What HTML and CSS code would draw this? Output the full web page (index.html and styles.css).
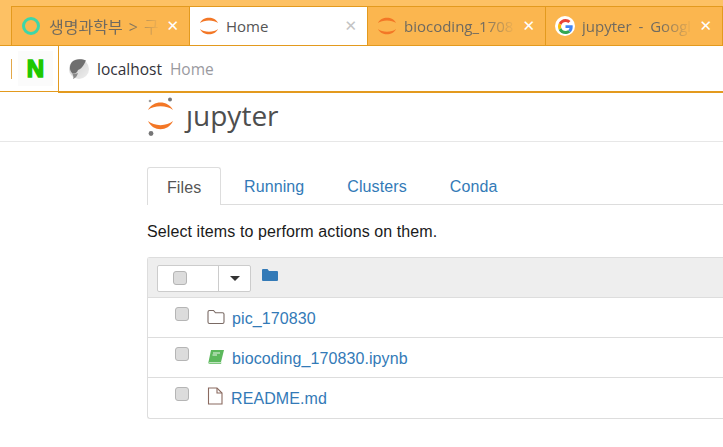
FILE: index.html
```html
<!DOCTYPE html>
<html lang="ko">
<head>
    <meta charset="UTF-8">
    <title>Home</title>
    <link rel="stylesheet" href="styles.css">
</head>
<body>
    <svg class="defs">
        <symbol id="jup" viewBox="0 0 20 20">
            <path d="M1 7 C4 0 16 0 19 7 C15 3.500 5 3.500 1 7Z" fill="#f37726"/>
            <path d="M1 13 C5 16.500 15 16.500 19 13 C16 20 4 20 1 13Z" fill="#f37726"/>
        </symbol>
    </svg>

    <div class="tabstrip">
        <div class="tab">
            <span class="ring"></span>
            <span class="tab-title first">생명과학부 &gt; 구</span>
            <span class="tab-x">✕</span>
        </div>
        <div class="tab active">
            <svg class="fav"><use href="#jup"/></svg>
            <span class="tab-title">Home</span>
            <span class="tab-x">✕</span>
        </div>
        <div class="tab">
            <svg class="fav"><use href="#jup"/></svg>
            <span class="tab-title">biocoding_1708</span>
            <span class="tab-x">✕</span>
        </div>
        <div class="tab">
            <span class="g-badge">
                <svg viewBox="0 0 48 48" width="15" height="15">
                    <path fill="#ea4335" d="M24 9.500c3.500 0 6.700 1.200 9.200 3.600l6.900-6.900C35.900 2.400 30.400 0 24 0 14.600 0 6.500 5.400 2.600 13.200l8 6.200C12.500 13.600 17.800 9.500 24 9.500z"/>
                    <path fill="#4285f4" d="M47 24.500c0-1.600-.1-3.100-.4-4.500H24v9h12.900c-.6 3-2.200 5.500-4.700 7.200l7.700 6C44.400 38.500 47 32 47 24.500z"/>
                    <path fill="#fbbc05" d="M10.600 28.600c-.5-1.400-.8-3-.8-4.600s.3-3.200.8-4.600l-8-6.200C.9 16.500 0 20.100 0 24s.9 7.500 2.600 10.800l8-6.200z"/>
                    <path fill="#34a853" d="M24 48c6.500 0 11.900-2.100 15.900-5.800l-7.700-6c-2.200 1.400-4.900 2.300-8.200 2.300-6.200 0-11.500-4.200-13.400-9.800l-8 6.200C6.500 42.600 14.600 48 24 48z"/>
                </svg>
            </span>
            <span class="tab-title wide">jupyter - Googl</span>
            <span class="tab-x">✕</span>
        </div>
    </div>

    <div class="addressbar">
        <div class="bar-left">
            <span class="bar-sep"></span>
            <span class="naver">N</span>
        </div>
        <div class="url">
            <svg class="site-icon" viewBox="0 0 20 20" width="20" height="20">
                <defs>
                    <linearGradient id="globe" x1="0" y1="0" x2="1" y2="1">
                        <stop offset="0" stop-color="#c8c8c8"/>
                        <stop offset="1" stop-color="#f0f0f0"/>
                    </linearGradient>
                </defs>
                <circle cx="10" cy="10" r="10" fill="url(#globe)"/>
                <path d="M3 3 C6 -0.500 13 -0.500 17 1.500 C15 5 14 9 9 11 C8 14 6 15 3 14 C0 11 0.500 6 3 3Z" fill="#6f6f6f"/>
                <path d="M3 14 C5 15 7 15 9 14 C8 17 7 19 4 20 C5 18 4 16 3 14Z" fill="#8a8a8a"/>
            </svg>
            <span class="host">localhost</span>
            <span class="page-title">Home</span>
        </div>
    </div>

    <div class="header">
        <div class="logo">
            <svg class="logo-mark" viewBox="0 0 28 40" width="28" height="40">
                <circle cx="23" cy="2.500" r="2" fill="#767677"/>
                <circle cx="4" cy="36.500" r="2.400" fill="#767677"/>
                <circle cx="3" cy="4" r="1.300" fill="#9e9e9e"/>
                <path d="M1 13 C6 3 21 3 26 13 C20 8 7 8 1 13Z" fill="#f37726"/>
                <path d="M1 24 C7 29.500 20 29.500 26 24 C21 35 6 35 1 24Z" fill="#f37726"/>
            </svg>
            <span class="logo-text">ȷupyter</span>
        </div>
    </div>

    <div class="main">
        <ul class="nav-tabs">
            <li class="current">Files</li>
            <li>Running</li>
            <li>Clusters</li>
            <li>Conda</li>
        </ul>
        <p class="hint">Select items to perform actions on them.</p>

        <div class="list">
            <div class="toolbar">
                <div class="select-btn">
                    <span class="check-wrap"><span class="check"></span></span>
                    <span class="caret-wrap"><span class="caret"></span></span>
                </div>
                <svg class="new-folder" viewBox="0 0 16 14" width="16" height="14">
                    <path d="M0 2 Q0 1 1 1 H5.500 L7 3 H15 Q16 3 16 4 V12 Q16 13 15 13 H1 Q0 13 0 12Z" fill="#337ab7"/>
                </svg>
            </div>
            <div class="row">
                <span class="check"></span>
                <svg class="item-icon" viewBox="0 0 18 16" width="18" height="16">
                    <path d="M1 3 Q1 1.500 2.500 1.500 H6.500 L8.500 3.800 H15.500 Q17 3.800 17 5.300 V13 Q17 14.500 15.500 14.500 H2.500 Q1 14.500 1 13Z" fill="none" stroke="#7a6a64" stroke-width="1.100"/>
                </svg>
                <a class="item-name">pic_170830</a>
            </div>
            <div class="row">
                <span class="check"></span>
                <svg class="item-icon" viewBox="0 0 18 16" width="18" height="16">
                    <path d="M4 1 H17 L14 13 H1.500Z" fill="#5cb85c"/>
                    <path d="M1 13 Q1 15 3 15 H14 L14.500 13.500 H3 Z" fill="#7fc77f"/>
                    <path d="M6 4 H13 M5.500 6 H10" stroke="#e6f5e6" stroke-width="1"/>
                </svg>
                <a class="item-name">biocoding_170830.ipynb</a>
            </div>
            <div class="row">
                <span class="check"></span>
                <svg class="item-icon tall" viewBox="0 0 16 18" width="16" height="18">
                    <path d="M1.500 17 V1 H10 L15 6 V17Z" fill="none" stroke="#8a6a60" stroke-width="1.100"/>
                    <path d="M10 1 V6 H15" fill="none" stroke="#8a6a60" stroke-width="1.100"/>
                </svg>
                <a class="item-name readme">README.md</a>
            </div>
        </div>
    </div>
</body>
</html>
```

FILE: styles.css
```css
html, body {
    margin: 0;
    height: 447px;
    overflow: hidden;
    background: #ffffff;
    font-family: "Liberation Sans", Arial, sans-serif;
}

.defs {
    display: none;
}

/* barra de abas */
.tabstrip {
    display: flex;
    height: 46px;
    box-sizing: border-box;
    padding: 6px 0 0 11px;
    background: #fdc164;
    border-bottom: 1px solid #e39a1e;
}

.tab {
    width: 178px;
    height: 39px;
    box-sizing: border-box;
    display: flex;
    align-items: center;
    padding: 0 10px 0 9px;
    background: #fbb64f;
    border: 1px solid #e39a1e;
    border-bottom: none;
    border-right: none;
    font-family: "Open Sans", "Noto Sans CJK KR", sans-serif;
    font-size: 15px;
    color: #6f6a60;
}

.tab:last-child {
    border-right: 1px solid #e39a1e;
}

.tab.active {
    background: #ffffff;
    color: #555555;
}

.tab-title {
    flex: 1;
    min-width: 0;
    overflow: hidden;
    white-space: nowrap;
    margin-left: 7px;
    -webkit-mask-image: linear-gradient(to right, #000 70%, transparent 100%);
    mask-image: linear-gradient(to right, #000 70%, transparent 100%);
}

.tab-title.first {
    margin-left: 9px;
    font-size: 16px;
    word-spacing: 2px;
}

.tab-title.wide {
    word-spacing: 3px;
}

.tab.active .tab-title {
    -webkit-mask-image: none;
    mask-image: none;
}

.tab-x {
    flex: none;
    font-size: 15px;
    font-family: "DejaVu Sans", sans-serif;
    font-weight: bold;
    color: #ffffff;
    margin-left: 6px;
}

.tab.active .tab-x {
    color: #c4c4c4;
}

.ring {
    width: 12px;
    height: 12px;
    margin-left: 1px;
    border: 3px solid #3ed6a8;
    border-radius: 50%;
    flex: none;
}

.fav {
    width: 20px;
    height: 20px;
    flex: none;
}

.g-badge {
    width: 20px;
    height: 20px;
    border-radius: 50%;
    background: #ffffff;
    display: flex;
    align-items: center;
    justify-content: center;
    flex: none;
}

/* barra de endereço */
.addressbar {
    display: flex;
    height: 47px;
}

.bar-left {
    width: 58px;
    height: 46px;
    box-sizing: border-box;
    display: flex;
    align-items: center;
    padding-left: 11px;
    border-bottom: 1px solid #e39a1e;
}

.bar-sep {
    width: 1px;
    height: 20px;
    background: #e3a84a;
}

.naver {
    width: 35px;
    height: 35px;
    margin-left: 6px;
    display: flex;
    align-items: center;
    justify-content: center;
    background: #fbfbfb;
    color: #1ec800;
    font-weight: bold;
    font-size: 24px;
    -webkit-text-stroke: 1.5px #1ec800;
}

.url {
    flex: 1;
    display: flex;
    align-items: center;
    box-sizing: border-box;
    padding-left: 10px;
    border-left: 1px solid #e39a1e;
    border-bottom: 2px solid #e39a1e;
    font-family: "Open Sans", sans-serif;
    font-size: 15.5px;
}

.host {
    margin-left: 8px;
    color: #33323a;
}

.page-title {
    margin-left: 8px;
    color: #9a9a9f;
}

/* cabeçalho do jupyter */
.header {
    height: 49px;
    box-sizing: border-box;
    border-bottom: 1px solid #e7e7e7;
    padding-left: 147px;
}

.logo {
    display: flex;
    align-items: center;
    height: 48px;
}

.logo-text {
    margin-left: 11px;
    margin-top: -4px;
    font-family: "Open Sans", sans-serif;
    font-size: 28px;
    color: #4e4e4e;
}

.main {
    padding: 25px 0 0 147px;
    font-size: 16px;
    letter-spacing: 0.1px;
}

.nav-tabs {
    list-style: none;
    display: flex;
    margin: 0;
    padding: 0;
    height: 37px;
    border-bottom: 1px solid #dddddd;
}

.nav-tabs li {
    height: 37px;
    box-sizing: border-box;
    padding: 10px 20px 0 23px;
    color: #337ab7;
    line-height: 20px;
}

.nav-tabs .current {
    width: 74px;
    height: 38px;
    padding: 10px 0 0 19px;
    border: 1px solid #dddddd;
    border-bottom: none;
    border-radius: 3px 3px 0 0;
    background: #ffffff;
    color: #555555;
}

.hint {
    margin: 18px 0 0;
    color: #1a1a1a;
    line-height: 18px;
}

.list {
    margin-top: 16px;
    border: 1px solid #dddddd;
    border-right: none;
    border-radius: 3px 0 0 3px;
}

.toolbar {
    height: 40px;
    box-sizing: border-box;
    display: flex;
    align-items: center;
    padding: 1px 0 0 9px;
    background: #eeeeee;
    border-bottom: 1px solid #dddddd;
}

.select-btn {
    display: flex;
    height: 27px;
    background: #ffffff;
    border: 1px solid #cccccc;
    border-radius: 2px;
    box-sizing: border-box;
}

.check-wrap {
    width: 61px;
    display: flex;
    align-items: center;
    padding-left: 15px;
    box-sizing: border-box;
    border-right: 1px solid #cccccc;
}

.caret-wrap {
    width: 31px;
    display: flex;
    align-items: center;
    justify-content: center;
}

.caret {
    border-top: 5px solid #333333;
    border-left: 5px solid transparent;
    border-right: 5px solid transparent;
}

.check {
    width: 14px;
    height: 14px;
    box-sizing: border-box;
    flex: none;
    border: 1px solid #b5b5b5;
    border-radius: 3px;
    background: #dcdcdc;
}

.new-folder {
    margin: -6px 0 0 11px;
}

.row {
    height: 40px;
    box-sizing: border-box;
    display: flex;
    align-items: center;
    padding-left: 27px;
    border-bottom: 1px solid #dddddd;
}

.row:last-child {
    border-bottom: none;
}

.row .check {
    margin-top: -8px;
}

.item-icon {
    margin: -2px 0 0 18px;
}

.item-icon.tall {
    margin-top: -4px;
}

.item-name {
    margin: 2px 0 0 7px;
    color: #337ab7;
}

.item-name.readme {
    margin-left: 8px;
}
```
